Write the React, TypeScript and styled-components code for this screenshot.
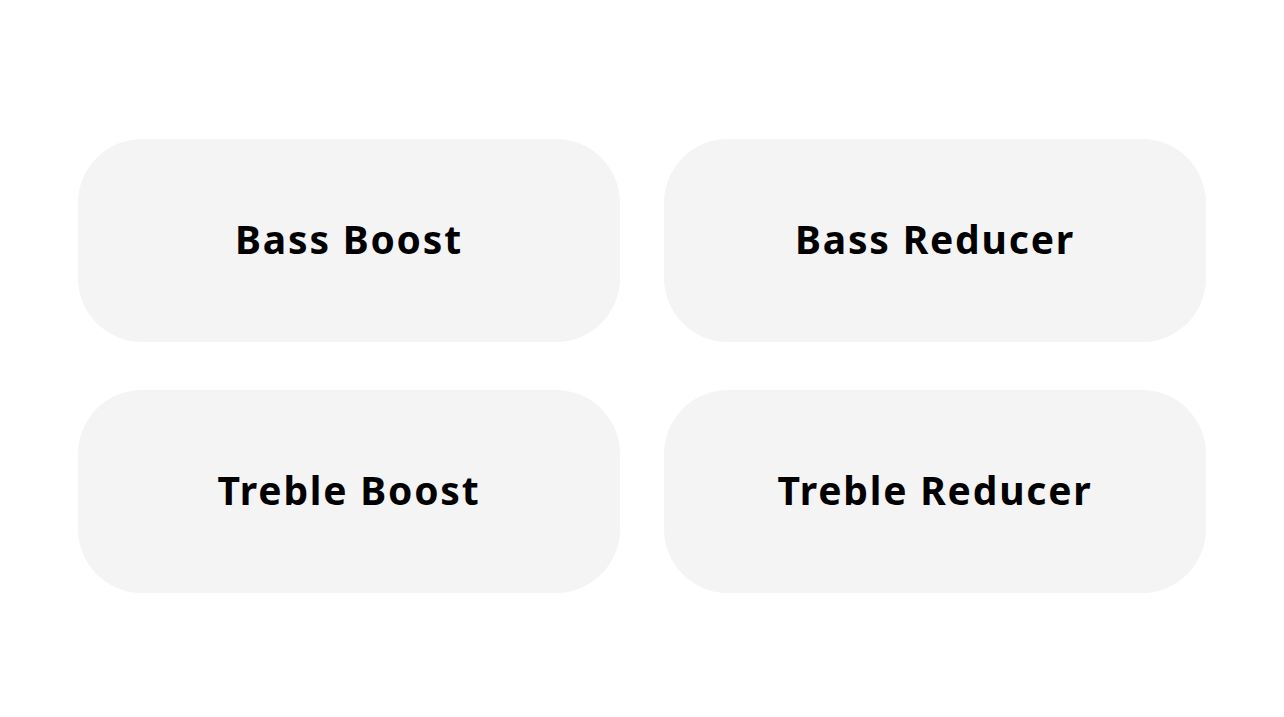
import { createGlobalStyle } from 'styled-components';
import styled from 'styled-components';

const GlobalStyle = createGlobalStyle`
  html, body {
    margin: 0;
    padding: 0;
    background: #ffffff;
    font-family: 'Noto Sans', 'Lato', sans-serif;
  }
`;

const presets = ['Bass Boost', 'Bass Reducer', 'Treble Boost', 'Treble Reducer'];

export default function App() {
  return (
    <>
      <GlobalStyle />
      <Page>
        <PresetGrid>
          {presets.map((name) => (
            <PresetCard key={name}>
              <PresetLabel>{name}</PresetLabel>
            </PresetCard>
          ))}
        </PresetGrid>
      </Page>
    </>
  );
}

const Page = styled.main`
  display: flex;
  justify-content: center;
  padding-top: 139px;
  min-height: 100vh;
  box-sizing: border-box;
`;

const PresetGrid = styled.div`
  display: grid;
  grid-template-columns: repeat(2, 542px);
  grid-auto-rows: 203px;
  column-gap: 44px;
  row-gap: 48px;
`;

const PresetCard = styled.button`
  display: flex;
  align-items: center;
  justify-content: center;
  border: none;
  border-radius: 64px;
  background: #f4f4f4;
  cursor: pointer;
  padding: 0 0 4px;
`;

const PresetLabel = styled.span`
  font-family: 'Noto Sans', sans-serif;
  font-weight: 700;
  font-size: 39px;
  letter-spacing: 1.8px;
  color: #000000;
`;
